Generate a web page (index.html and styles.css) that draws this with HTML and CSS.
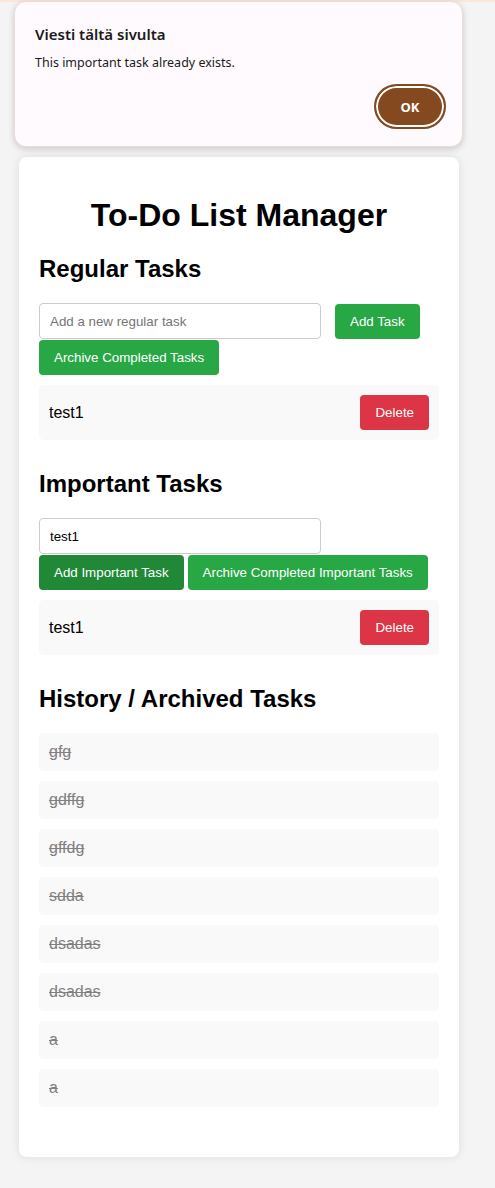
FILE: index.html
```html
<!DOCTYPE html>
<html lang="en">
<head>
<meta charset="utf-8">
<title>To-Do List Manager</title>
<link rel="stylesheet" href="styles.css">
</head>
<body>
<div class="topline"></div>
<div class="container">
  <h1>To-Do List Manager</h1>

  <h2>Regular Tasks</h2>
  <div class="controls">
    <input class="task-input" type="text" placeholder="Add a new regular task">
    <button class="btn">Add Task</button>
    <button class="btn">Archive Completed Tasks</button>
  </div>
  <ul class="list">
    <li class="item"><span>test1</span><button class="btn-del">Delete</button></li>
  </ul>

  <h2>Important Tasks</h2>
  <div class="controls">
    <input class="task-input" type="text" value="test1">
    <button class="btn btn-active">Add Important Task</button>
    <button class="btn">Archive Completed Important Tasks</button>
  </div>
  <ul class="list">
    <li class="item"><span>test1</span><button class="btn-del">Delete</button></li>
  </ul>

  <h2>History / Archived Tasks</h2>
  <ul class="list history">
    <li class="item done">gfg</li>
    <li class="item done">gdffg</li>
    <li class="item done">gffdg</li>
    <li class="item done">sdda</li>
    <li class="item done">dsadas</li>
    <li class="item done">dsadas</li>
    <li class="item done">a</li>
    <li class="item done">a</li>
  </ul>
</div>

<div class="dialog" role="alertdialog">
  <div class="dialog-title">Viesti tältä sivulta</div>
  <div class="dialog-msg">This important task already exists.</div>
  <div class="dialog-actions">
    <button class="dialog-ok">OK</button>
  </div>
</div>
</body>
</html>
```

FILE: styles.css
```css
html, body {
  margin: 0;
}
body {
  background: #f4f4f4;
  font-family: "Liberation Sans", Arial, sans-serif;
  padding: 157px 36px 31px 19px;
  position: relative;
}
.topline {
  position: absolute;
  left: 0;
  top: 0;
  right: 0;
  height: 2px;
  background: #fbe6da;
}
.container {
  width: 440px;
  box-sizing: border-box;
  background: #fff;
  padding: 20px;
  border-radius: 8px;
  box-shadow: 0 0 10px rgba(0, 0, 0, 0.1);
}
h1 {
  font-size: 32px;
  text-align: center;
  margin: 20px 0 21px;
  color: #000;
}
h2 {
  font-size: 24px;
  margin: 20px 0 20px;
  color: #000;
}
.controls {
  display: flex;
  flex-wrap: wrap;
  align-items: flex-end;
  column-gap: 4px;
  row-gap: 1px;
}
.task-input {
  width: 282px;
  height: 36px;
  box-sizing: border-box;
  border: 1px solid #ccc;
  border-radius: 4px;
  padding: 0 10px;
  margin-right: 10px;
  font-family: "Liberation Sans", Arial, sans-serif;
  font-size: 13.333px;
  color: #000;
  background: #fff;
}
.task-input::placeholder {
  color: #757575;
}
.btn {
  height: 35px;
  padding: 0 15px;
  border: none;
  border-radius: 4px;
  background: #28a745;
  color: #fff;
  font-family: "Liberation Sans", Arial, sans-serif;
  font-size: 13.333px;
}
.btn-active {
  background: #218838;
}
.list {
  list-style: none;
  margin: 10px 0 30px;
  padding: 0;
  display: flex;
  flex-direction: column;
  gap: 10px;
}
.item {
  display: flex;
  align-items: center;
  justify-content: space-between;
  background: #f9f9f9;
  border-radius: 5px;
  padding: 10px;
  font-size: 16px;
  color: #000;
  min-height: 18px;
}
.btn-del {
  height: 35px;
  padding: 0 15px;
  border: none;
  border-radius: 4px;
  background: #dc3545;
  color: #fff;
  font-family: "Liberation Sans", Arial, sans-serif;
  font-size: 13.333px;
}
.history {
  margin-top: 0;
  margin-bottom: 30px;
}
.done {
  text-decoration: line-through;
  color: #808080;
}

.dialog {
  position: absolute;
  left: 14px;
  top: 1px;
  width: 449px;
  height: 146px;
  box-sizing: border-box;
  background: #fffafd;
  border: 1px solid #ecdcd4;
  border-radius: 12px;
  box-shadow: 0 2px 6px rgba(0, 0, 0, 0.18);
  padding: 22px 16px 0 20px;
  font-family: "Noto Sans", "Open Sans", sans-serif;
  color: #1b1b1b;
}
.dialog-title {
  font-size: 15px;
  font-weight: 600;
  line-height: 20px;
}
.dialog-msg {
  font-size: 12.5px;
  line-height: 18px;
  margin-top: 10px;
}
.dialog-actions {
  display: flex;
  justify-content: flex-end;
  margin-top: 12px;
}
.dialog-ok {
  width: 72px;
  height: 45px;
  box-sizing: border-box;
  border-radius: 23px;
  border: 2px solid #84491f;
  box-shadow: inset 0 0 0 2px #fff;
  background: #84491f;
  color: #fff;
  font-family: "Noto Sans", "Open Sans", sans-serif;
  font-size: 13px;
  font-weight: 700;
}
```
